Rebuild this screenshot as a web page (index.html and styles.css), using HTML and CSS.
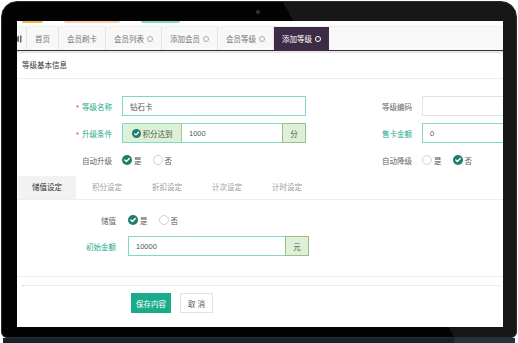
FILE: index.html
```html
<!DOCTYPE html>
<html lang="zh-CN">
<head>
    <meta charset="UTF-8">
    <meta name="viewport" content="width=device-width, initial-scale=1.0">
    <title>添加等级</title>
    <link rel="stylesheet" href="styles.css">
</head>
<body>
    <div class="laptop">
        <div class="bezel"><span class="camera"></span></div>
        <div class="screen">
            <!-- toolbar buttons, only the bottom edge shows -->
            <div class="peeks">
                <span class="peek yellow"></span>
                <span class="peek orange"></span>
                <span class="peek green"></span>
            </div>

            <div class="nav">
                <span class="nav-item nav-prev">
                    <svg width="8" height="8" viewBox="0 0 8 8"><path d="M0 4 L5 0.5 V7.5 Z" fill="#666"/><rect x="6" y="0.5" width="1.5" height="7" fill="#666"/></svg>
                </span>
                <span class="nav-item">首页</span>
                <span class="nav-item">会员刷卡</span>
                <span class="nav-item">会员列表<i class="ring"></i></span>
                <span class="nav-item">添加会员<i class="ring"></i></span>
                <span class="nav-item">会员等级<i class="ring"></i></span>
                <span class="nav-item active">添加等级<i class="ring"></i></span>
            </div>

            <div class="panel-title">等级基本信息</div>

            <div class="form">
                <div class="row">
                    <div class="field">
                        <label class="label req"><em>*</em>等级名称</label>
                        <div class="control teal">钻石卡</div>
                    </div>
                    <div class="field">
                        <label class="label">等级编码</label>
                        <div class="control"></div>
                    </div>
                </div>
                <div class="row">
                    <div class="field">
                        <label class="label req"><em>*</em>升级条件</label>
                        <div class="group">
                            <span class="addon addon-check">
                                <svg width="9" height="9" viewBox="0 0 10 10"><circle cx="5" cy="5" r="5" fill="#1e7d6b"/><path d="M2.8 5.1 L4.4 6.6 L7.3 3.6" stroke="#fff" stroke-width="1.4" fill="none" stroke-linecap="round" stroke-linejoin="round"/></svg>
                                积分达到
                            </span>
                            <span class="group-input">1000</span>
                            <span class="addon addon-end">分</span>
                        </div>
                    </div>
                    <div class="field">
                        <label class="label req">售卡金额</label>
                        <div class="control teal">0</div>
                    </div>
                </div>
                <div class="row last">
                    <div class="field">
                        <label class="label">自动升级</label>
                        <div class="radios">
                            <span class="radio on">是</span>
                            <span class="radio">否</span>
                        </div>
                    </div>
                    <div class="field">
                        <label class="label">自动降级</label>
                        <div class="radios">
                            <span class="radio">是</span>
                            <span class="radio on">否</span>
                        </div>
                    </div>
                </div>
            </div>

            <div class="subtabs">
                <span class="subtab active">储值设定</span>
                <span class="subtab">积分设定</span>
                <span class="subtab">折扣设定</span>
                <span class="subtab">计次设定</span>
                <span class="subtab">计时设定</span>
            </div>

            <div class="tab-body">
                <div class="row">
                    <div class="field wide">
                        <label class="label">储值</label>
                        <div class="radios">
                            <span class="radio on">是</span>
                            <span class="radio">否</span>
                        </div>
                    </div>
                </div>
                <div class="row">
                    <div class="field wide">
                        <label class="label req">初始金额</label>
                        <div class="group short">
                            <span class="group-input">10000</span>
                            <span class="addon addon-end">元</span>
                        </div>
                    </div>
                </div>
            </div>

            <div class="divider"></div>
            <div class="dotted"></div>

            <div class="actions">
                <button class="btn btn-save">保存内容</button>
                <button class="btn btn-cancel">取 消</button>
            </div>
        </div>
    </div>
    <div class="base"></div>
</body>
</html>
```

FILE: styles.css
```css
body {
    margin: 0;
    background: #fff;
    font-family: "Liberation Sans", "Noto Sans CJK SC", sans-serif;
    font-size: 7.5px;
}
.laptop {
    width: 486px;
    margin: 1px 0 0 1px;
    padding: 0 13px 10px 15px;
    border: 1px solid #2c2c2c;
    border-radius: 16px 16px 6px 6px;
    background: linear-gradient(63deg, #030303 66%, #171717 66%);
}
.bezel {
    height: 19px;
    display: flex;
    align-items: center;
    padding-left: 239px;
}
.camera {
    width: 4px;
    height: 4px;
    border-radius: 50%;
    background: #2a3442;
}
.screen {
    height: 306px;
    background: #fff;
    overflow: hidden;
}
.base {
    height: 5px;
    margin: 0 3px 0 3px;
    background: linear-gradient(90deg, #18222c 88%, #26313b 88%);
}

/* top toolbar peeks */
.peeks {
    display: flex;
    gap: 21px;
    padding-left: 5px;
    height: 2px;
}
.peek {
    height: 2px;
    border-radius: 0 0 2px 2px;
}
.peek.yellow { width: 21px; background: #eabb4c; }
.peek.orange { width: 56px; background: #f8cfae; }
.peek.green { width: 39px; background: #86d9c4; }

/* page tabs */
.nav {
    display: flex;
    height: 23px;
    margin-top: 3px;
    background: #f8f8f8;
    border-top: 1px solid #efefef;
    border-bottom: 1px solid #3e2c47;
    box-shadow: 0 2px 0 #e6e6e6;
}
.nav-item {
    display: flex;
    align-items: center;
    gap: 3px;
    padding: 0 8px;
    border-right: 1px solid #e6e6e6;
    color: #777;
    white-space: nowrap;
}
.nav-prev {
    padding: 0 1px 0 0;
    width: 8px;
    overflow: hidden;
}
.nav-prev svg {
    margin-left: -3px;
}
.nav-item.active {
    background: #3e2c47;
    color: #fff;
    border-right: none;
}
.ring {
    display: inline-block;
    width: 6px;
    height: 6px;
    box-sizing: border-box;
    border: 1.5px solid #aaa;
    border-radius: 50%;
}
.active .ring {
    border-color: #fff;
}

.panel-title {
    padding: 8px 5px 5px;
    line-height: 14px;
    color: #333;
    border-bottom: 1px solid #eee;
}

/* form */
.form {
    padding-top: 17px;
}
.row {
    display: flex;
    gap: 11px;
    height: 20px;
    margin-bottom: 7px;
}
.row.last {
    margin-bottom: 6px;
}
.field {
    flex: none;
    display: flex;
    align-items: center;
    gap: 10px;
}
.label {
    width: 95px;
    text-align: right;
    color: #666;
}
.label em {
    font-style: normal;
    color: #e53b3b;
    margin-right: 3px;
}
.label.req {
    color: #1dab8c;
}
.field.wide {
    gap: 12px;
}
.field.wide .label {
    width: 99px;
}
.control {
    width: 184px;
    height: 20px;
    box-sizing: border-box;
    border: 1px solid #e3e3e3;
    padding: 0 7px;
    display: flex;
    align-items: center;
    color: #555;
}
.control.teal {
    border-color: #82d8c4;
}
.group {
    display: flex;
    width: 184px;
    height: 20px;
    box-sizing: border-box;
    border: 1px solid #82d8c4;
}
.group.short {
    width: 181px;
}
.group-input {
    flex: 1;
    display: flex;
    align-items: center;
    padding: 0 7px;
    color: #555;
}
.addon {
    display: flex;
    align-items: center;
    justify-content: center;
    background: #dff0d8;
    color: #3d5f3a;
}
.addon-check {
    width: 58px;
    gap: 2px;
    border-right: 1px solid #a6c796;
}
.addon-end {
    width: 22px;
    margin: -1px -1px -1px 0;
    border: 1px solid #9cbf8a;
}
.radios {
    width: 184px;
    display: flex;
    gap: 11px;
}
.radio {
    display: flex;
    align-items: center;
    gap: 2px;
    color: #555;
}
.radio::before {
    content: "";
    width: 10px;
    height: 10px;
    box-sizing: border-box;
    border: 1px solid #d2d2d2;
    border-radius: 50%;
    background: #fff;
}
.radio.on::before {
    border: none;
    background: #1e7d6b url("data:image/svg+xml,%3Csvg xmlns='http://www.w3.org/2000/svg' viewBox='0 0 10 10'%3E%3Cpath d='M2.8 5.1 L4.4 6.6 L7.3 3.6' stroke='%23fff' stroke-width='1.4' fill='none' stroke-linecap='round' stroke-linejoin='round'/%3E%3C/svg%3E") center / 10px 10px no-repeat;
}

/* sub tabs */
.subtabs {
    display: flex;
    gap: 2px;
    padding-left: 1px;
    height: 23px;
    border-bottom: 1px solid #eee;
}
.subtab {
    width: 58px;
    line-height: 23px;
    text-align: center;
    color: #999;
}
.subtab.active {
    background: #f2f2f2;
    color: #333;
}
.tab-body {
    padding-top: 10px;
}
.tab-body .row {
    margin-bottom: 6px;
}

.divider {
    margin-top: 20px;
    border-top: 1px solid #eee;
}
.dotted {
    margin: 8px 3px 0 5px;
    border-top: 1px dotted #d8d8d8;
}
.actions {
    display: flex;
    gap: 9px;
    padding-left: 114px;
    margin-top: 7px;
}
.btn {
    height: 20px;
    font-family: inherit;
    font-size: 7.5px;
    padding: 0;
    cursor: pointer;
}
.btn-save {
    width: 40px;
    border: none;
    background: #1aab8b;
    color: #fff;
}
.btn-cancel {
    width: 33px;
    border: 1px solid #e3e3e3;
    background: #fff;
    color: #555;
}
```
